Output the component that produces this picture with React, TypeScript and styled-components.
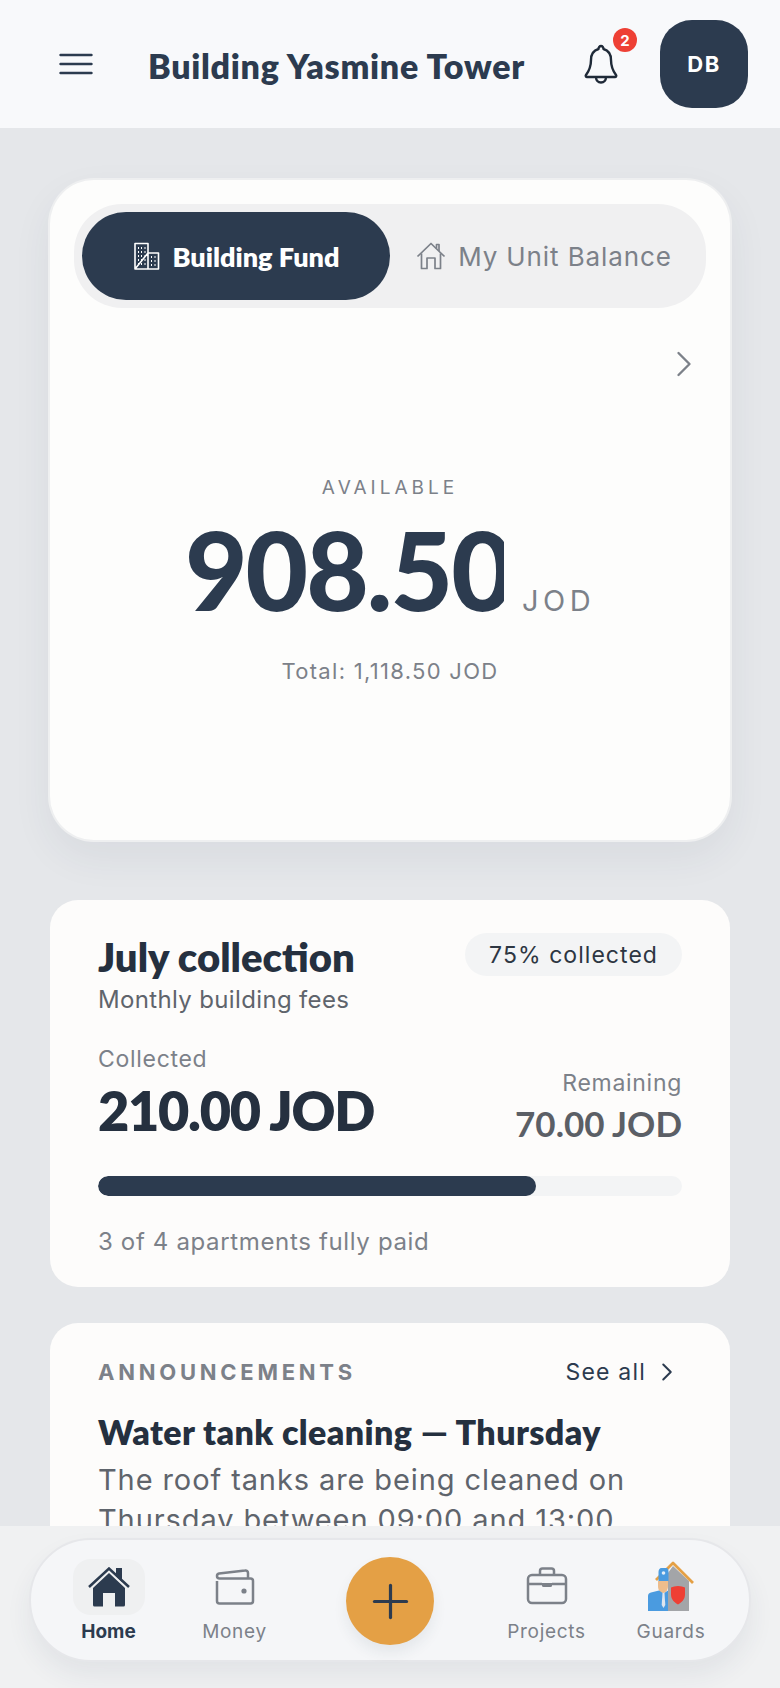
import styled, { createGlobalStyle } from "styled-components";
import { ChevronRight, Plus } from "lucide-react";

const navy = "#2c3b4f";
const grey = "#7c8189";

const GlobalStyle = createGlobalStyle`
  html, body {
    margin: 0;
    padding: 0;
    height: 1688px;
    overflow: hidden;
    background: #e5e7ea;
    font-family: "Inter", "Liberation Sans", sans-serif;
  }
  * {
    box-sizing: border-box;
  }
`;

const MenuIcon = () => (
  <svg width="34" height="22" viewBox="0 0 34 22" fill="none" stroke={navy} strokeWidth="2.400" strokeLinecap="round">
    <path d="M1.500 2h31M1.500 11h31M1.500 20h31" />
  </svg>
);

const BellIcon = () => (
  <svg width="36" height="40" viewBox="0 0 36 40" fill="none" stroke="#1f2a38" strokeWidth="2.400" strokeLinejoin="round">
    <path d="M18 2c1.500 0 2.500 1.500 2.500 3 5 1.500 7.500 6 7.500 11 0 7 2 11 5 15 .7 1 0 2-1 2H4c-1 0-1.700-1-1-2 3-4 5-8 5-15 0-5 2.500-9.500 7.500-11C15.500 3.500 16.500 2 18 2z" />
    <path d="M13 33c0 3 2 5.500 5 5.500s5-2.500 5-5.500" />
  </svg>
);

const BuildingIcon = () => (
  <svg width="28" height="28" viewBox="0 0 28 28" fill="none" stroke="#fff" strokeWidth="1.600">
    <path d="M2 27V1.500h13V27M15 11h10.500V27H2z" strokeLinejoin="round" />
    <path
      d="M5 6h1M8 6h1M11.500 6h1M5 10h1M8 10h1M11.500 10h1M5 14h1M8 14h1M11.500 14h1M5 18h1M8 18h1M11.500 18h1M5 22h1M8 22h1M11.500 22h1M18 15h1M21.500 15h1M18 19h1M21.500 19h1M18 23h1M21.500 23h1"
      strokeWidth="1.800"
    />
  </svg>
);

const HouseOutlineIcon = () => (
  <svg width="30" height="28" viewBox="0 0 30 28" fill="none" stroke={grey} strokeWidth="1.700" strokeLinejoin="round">
    <path d="M1.500 14.500 15 1.500l13.500 13" />
    <path d="M5.500 11.500V26.500h5.500V16h8v10.500h5.500V11.500" />
    <path d="M20.500 6.500V2.500h2.500v6.500" />
  </svg>
);

const HomeSolidIcon = () => (
  <svg width="42" height="40" viewBox="0 0 42 40" fill="none">
    <path
      d="M5 21 21 6l16 15v17a1.500 1.500 0 0 1-1.500 1.500H27V26h-12v13.500H6.500A1.500 1.500 0 0 1 5 38z"
      fill={navy}
    />
    <path d="M28 1h6v14l-6-6z" fill={navy} />
    <path d="M1 20 21 1.500 41 20" stroke={navy} strokeWidth="2.500" />
  </svg>
);

const WalletIcon = () => (
  <svg width="40" height="36" viewBox="0 0 40 36" fill="none" stroke={grey} strokeWidth="2.500" strokeLinejoin="round">
    <path d="M2 12V32a2.500 2.500 0 0 0 2.500 2.500h31a2.500 2.500 0 0 0 2.500-2.500V12a2.500 2.500 0 0 0-2.500-2.500H4.500A2.500 2.500 0 0 1 2 7a2.500 2.500 0 0 1 2-2.500L30 1.500a2.500 2.500 0 0 1 3 2.500v5.500" />
    <circle cx="29" cy="22" r="2.600" fill={grey} stroke="none" />
  </svg>
);

const BriefcaseIcon = () => (
  <svg width="42" height="38" viewBox="0 0 42 38" fill="none" stroke={grey} strokeWidth="2.500" strokeLinejoin="round">
    <rect x="2" y="8" width="38" height="28" rx="4" />
    <path d="M14 8V4a2.500 2.500 0 0 1 2.500-2.500h9A2.500 2.500 0 0 1 28 4v4" />
    <path d="M2 17h14M26 17h14" />
    <path d="M16 16h10v2.500a1.500 1.500 0 0 1-1.500 1.500h-7a1.500 1.500 0 0 1-1.500-1.500z" fill={grey} stroke="none" />
  </svg>
);

const GuardsIcon = () => (
  <svg width="48" height="50" viewBox="0 0 48 50">
    <path d="M21 12 26 5l16 15v30H21z" fill="#a3a5a8" />
    <path d="M9 19 26 2l20 20" fill="none" stroke="#e4a045" strokeWidth="2.800" strokeLinejoin="round" />
    <path d="M31 25c3 0 5 1 7 1.500v7c0 5-3.500 8-7 10-3.500-2-7-5-7-10v-7c2-.5 4-1.500 7-1.500z" fill="#ee4035" />
    <path d="M11 20h10v5c0 4-2 7-5 7s-5-3-5-7z" fill="#edbd8c" />
    <path d="M11.500 11c0-2 1-4 3-4h5c1.500 0 2 2 2 4v9h-10z" fill="#4a9be0" />
    <circle cx="16.500" cy="12" r="1.800" fill="#e3eef8" />
    <path d="M1 50V35c0-2 1-3 3-3.500l8-2 4.500 3 4.500-3V50z" fill="#4a9be0" />
    <path d="M15.500 32h2l.8 12-1.800 3-1.800-3z" fill="#dfe6ee" />
  </svg>
);

const App = () => {
  return (
    <Screen>
      <GlobalStyle />
      <Header>
        <IconButton aria-label="Menu">
          <MenuIcon />
        </IconButton>
        <Title>Building Yasmine Tower</Title>
        <BellWrap>
          <BellIcon />
          <Badge>2</Badge>
        </BellWrap>
        <Avatar>DB</Avatar>
      </Header>

      <Main>
        <HeroCard>
          <Tabs>
            <Tab $active>
              <BuildingIcon />
              Building Fund
            </Tab>
            <Tab>
              <HouseOutlineIcon />
              My Unit Balance
            </Tab>
          </Tabs>
          <HeroNext>
            <ChevronRight size={44} color={grey} strokeWidth={1.300} />
          </HeroNext>
          <HeroBody>
            <Overline>AVAILABLE</Overline>
            <AmountRow>
              <Amount>908.50</Amount>
              <Currency>JOD</Currency>
            </AmountRow>
            <HeroTotal>Total: 1,118.50 JOD</HeroTotal>
          </HeroBody>
        </HeroCard>

        <CollectionCard>
          <CollectionTop>
            <div>
              <CardTitle>July collection</CardTitle>
              <CardSub>Monthly building fees</CardSub>
            </div>
            <Chip>75% collected</Chip>
          </CollectionTop>
          <Figures>
            <div>
              <FigureLabel>Collected</FigureLabel>
              <BigFigure>210.00 JOD</BigFigure>
            </div>
            <RightFigure>
              <FigureLabel>Remaining</FigureLabel>
              <SmallFigure>70.00 JOD</SmallFigure>
            </RightFigure>
          </Figures>
          <Track>
            <Fill style={{ width: `${(210 / 280) * 100}%` }} />
          </Track>
          <FootNote>3 of 4 apartments fully paid</FootNote>
        </CollectionCard>

        <NewsCard>
          <NewsHead>
            <NewsLabel>ANNOUNCEMENTS</NewsLabel>
            <SeeAll>
              See all
              <ChevronRight size={30} color={navy} strokeWidth={1.600} />
            </SeeAll>
          </NewsHead>
          <NewsTitle>Water tank cleaning — Thursday</NewsTitle>
          <NewsBody>The roof tanks are being cleaned on Thursday between 09:00 and 13:00</NewsBody>
        </NewsCard>
      </Main>

      <BottomArea>
        <BottomBar>
          <NavItem>
            <ActiveIcon>
              <HomeSolidIcon />
            </ActiveIcon>
            <NavLabel $active>Home</NavLabel>
          </NavItem>
          <NavItem>
            <NavIcon>
              <WalletIcon />
            </NavIcon>
            <NavLabel>Money</NavLabel>
          </NavItem>
          <Fab aria-label="Add">
            <Plus size={55} color={navy} strokeWidth={1.400} />
          </Fab>
          <NavItem>
            <NavIcon>
              <BriefcaseIcon />
            </NavIcon>
            <NavLabel>Projects</NavLabel>
          </NavItem>
          <NavItem>
            <NavIcon $low>
              <GuardsIcon />
            </NavIcon>
            <NavLabel>Guards</NavLabel>
          </NavItem>
        </BottomBar>
      </BottomArea>
    </Screen>
  );
};

export default App;

const Screen = styled.div`
  display: flex;
  flex-direction: column;
  width: 780px;
  height: 1688px;
  overflow: hidden;
  background: #e5e7ea;
`;

const Header = styled.header`
  display: flex;
  align-items: center;
  flex: none;
  height: 128px;
  padding: 0 32px 0 59px;
  background: #f8f9fb;
`;

const IconButton = styled.button`
  display: flex;
  align-items: center;
  justify-content: center;
  width: 34px;
  height: 22px;
  padding: 0;
  margin-top: -1px;
  border: 0;
  background: none;
`;

const Title = styled.h1`
  flex: 1;
  margin: 2px 0 0 55px;
  font-family: "Lato", sans-serif;
  font-size: 34px;
  font-weight: 800;
  letter-spacing: 0.700px;
  color: ${navy};
  white-space: nowrap;
`;

const BellWrap = styled.div`
  position: relative;
  display: flex;
  width: 36px;
  height: 40px;
  margin-right: 41px;
`;

const Badge = styled.span`
  position: absolute;
  top: -16px;
  right: -18px;
  display: flex;
  align-items: center;
  justify-content: center;
  width: 24px;
  height: 24px;
  border-radius: 50%;
  background: #ee4035;
  color: #fff;
  font-size: 15px;
  font-weight: 700;
`;

const Avatar = styled.div`
  display: flex;
  align-items: center;
  justify-content: center;
  width: 88px;
  height: 88px;
  border-radius: 32px;
  background: ${navy};
  color: #fff;
  font-size: 22px;
  font-weight: 700;
  letter-spacing: 1.500px;
`;

const Main = styled.main`
  display: flex;
  flex-direction: column;
  flex: 1;
  min-height: 0;
  padding: 52px 50px 0;
  overflow: hidden;
`;

const HeroCard = styled.section`
  flex: none;
  height: 660px;
  padding: 24px;
  margin-bottom: 60px;
  border-radius: 44px;
  background: #fdfdfc;
  box-shadow: 0 0 0 2px #eeeff0, 0 16px 40px rgba(44, 59, 79, 0.07);
`;

const Tabs = styled.div`
  display: grid;
  grid-template-columns: 1fr 1fr;
  height: 104px;
  padding: 8px;
  border-radius: 48px;
  background: #f0f0f1;
`;

const Tab = styled.div<{ $active?: boolean }>`
  display: flex;
  align-items: center;
  justify-content: center;
  gap: 12px;
  border-radius: 44px;
  background: ${(p) => (p.$active ? navy : "transparent")};
  color: ${(p) => (p.$active ? "#fff" : grey)};
  font-family: ${(p) => (p.$active ? `"Lato", sans-serif` : "inherit")};
  font-size: ${(p) => (p.$active ? "27px" : "26px")};
  font-weight: ${(p) => (p.$active ? 800 : 400)};
  letter-spacing: ${(p) => (p.$active ? 0 : 0.9)}px;
  white-space: nowrap;
`;

const HeroNext = styled.div`
  display: flex;
  justify-content: flex-end;
  padding-top: 34px;
`;

const HeroBody = styled.div`
  display: flex;
  flex-direction: column;
  align-items: center;
  padding-top: 90px;
`;

const Overline = styled.div`
  font-size: 19px;
  letter-spacing: 4px;
  color: ${grey};
`;

const AmountRow = styled.div`
  display: flex;
  align-items: baseline;
  gap: 18px;
  margin-top: 16px;
`;

const Amount = styled.div`
  width: 319px;
  overflow: hidden;
  font-family: "Lato", sans-serif;
  font-size: 108px;
  font-weight: 900;
  line-height: 1;
  letter-spacing: -2px;
  color: ${navy};
`;

const Currency = styled.span`
  font-size: 29px;
  letter-spacing: 4.500px;
  color: ${grey};
`;

const HeroTotal = styled.div`
  margin-top: 35px;
  font-size: 22px;
  letter-spacing: 1.300px;
  color: ${grey};
`;

const CollectionCard = styled.section`
  flex: none;
  height: 387px;
  margin-bottom: 36px;
  padding: 33px 48px 0;
  border-radius: 28px;
  background: #fdfcfb;
`;

const CollectionTop = styled.div`
  display: flex;
  justify-content: space-between;
  align-items: flex-start;
`;

const CardTitle = styled.h2`
  margin: 0 0 3px;
  font-family: "Lato", sans-serif;
  font-size: 40px;
  font-weight: 800;
  line-height: 48px;
  color: #25303f;
`;

const CardSub = styled.div`
  font-size: 24px;
  line-height: 32px;
  letter-spacing: 0.350px;
  color: #5f646c;
`;

const Chip = styled.div`
  display: flex;
  align-items: center;
  height: 43px;
  padding: 0 24px;
  border-radius: 22px;
  background: #f3f4f5;
  font-size: 23px;
  letter-spacing: 1.050px;
  color: #2d3642;
`;

const Figures = styled.div`
  display: flex;
  justify-content: space-between;
  align-items: flex-end;
  margin-top: 28px;
`;

const RightFigure = styled.div`
  text-align: right;
`;

const FigureLabel = styled.div`
  font-size: 23px;
  line-height: 30px;
  letter-spacing: 0.700px;
  color: ${grey};
`;

const BigFigure = styled.div`
  font-family: "Lato", sans-serif;
  font-size: 54px;
  font-weight: 800;
  line-height: 74px;
  letter-spacing: -1.300px;
  color: #25303f;
`;

const SmallFigure = styled.div`
  font-family: "Lato", sans-serif;
  font-size: 35px;
  font-weight: 700;
  line-height: 50px;
  color: #5b5f66;
`;

const Track = styled.div`
  height: 20px;
  margin-top: 28px;
  border-radius: 10px;
  background: #f3f4f5;
  overflow: hidden;
`;

const Fill = styled.div`
  height: 100%;
  border-radius: 10px;
  background: ${navy};
`;

const FootNote = styled.div`
  margin-top: 31px;
  font-size: 24px;
  letter-spacing: 0.650px;
  color: ${grey};
`;

const NewsCard = styled.section`
  flex: none;
  height: 300px;
  padding: 32px 48px 0;
  border-radius: 28px;
  background: #fdfcfb;
`;

const NewsHead = styled.div`
  display: flex;
  justify-content: space-between;
  align-items: center;
  height: 34px;
`;

const NewsLabel = styled.div`
  font-size: 22px;
  font-weight: 700;
  letter-spacing: 3.750px;
  color: ${grey};
`;

const SeeAll = styled.div`
  display: flex;
  align-items: center;
  gap: 6px;
  font-size: 23px;
  letter-spacing: 1.200px;
  color: ${navy};
`;

const NewsTitle = styled.h3`
  margin: 23px 0 0;
  font-family: "Lato", sans-serif;
  font-size: 34px;
  font-weight: 800;
  line-height: 40px;
  letter-spacing: 0.400px;
  color: #25303f;
`;

const NewsBody = styled.p`
  margin: 8px 0 0;
  font-size: 29px;
  line-height: 40px;
  letter-spacing: 0.900px;
  color: #5f646c;
`;

const BottomArea = styled.nav`
  flex: none;
  height: 162px;
  padding: 12px 29px 0;
  background: #f0f1f2;
`;

const BottomBar = styled.div`
  display: grid;
  grid-template-columns: 123px 129px 182px 131px 118px;
  align-items: start;
  height: 124px;
  padding: 0 16px;
  border: 2px solid #e6e7ea;
  border-radius: 62px;
  background: #f5f6f8;
  box-shadow: 0 14px 26px rgba(44, 59, 79, 0.07);
`;

const NavItem = styled.div`
  display: flex;
  flex-direction: column;
  align-items: center;
  padding-top: 19px;
`;

const NavIcon = styled.div<{ $low?: boolean }>`
  display: flex;
  align-items: flex-end;
  justify-content: center;
  height: 56px;
  padding-bottom: ${(p) => (p.$low ? 4 : 10)}px;
`;

const ActiveIcon = styled.div`
  display: flex;
  align-items: center;
  justify-content: center;
  width: 72px;
  height: 56px;
  border-radius: 18px;
  background: #eff0f1;
`;

const NavLabel = styled.span<{ $active?: boolean }>`
  margin-top: 5px;
  font-size: 19px;
  font-weight: ${(p) => (p.$active ? 700 : 400)};
  letter-spacing: ${(p) => (p.$active ? 0 : 0.7)}px;
  color: ${(p) => (p.$active ? navy : grey)};
`;

const Fab = styled.button`
  display: flex;
  align-items: center;
  justify-content: center;
  justify-self: center;
  width: 88px;
  height: 88px;
  margin-top: 17px;
  padding: 0;
  border: 0;
  border-radius: 50%;
  background: #e4a045;
  box-shadow: 0 8px 14px rgba(44, 59, 79, 0.08);
`;
